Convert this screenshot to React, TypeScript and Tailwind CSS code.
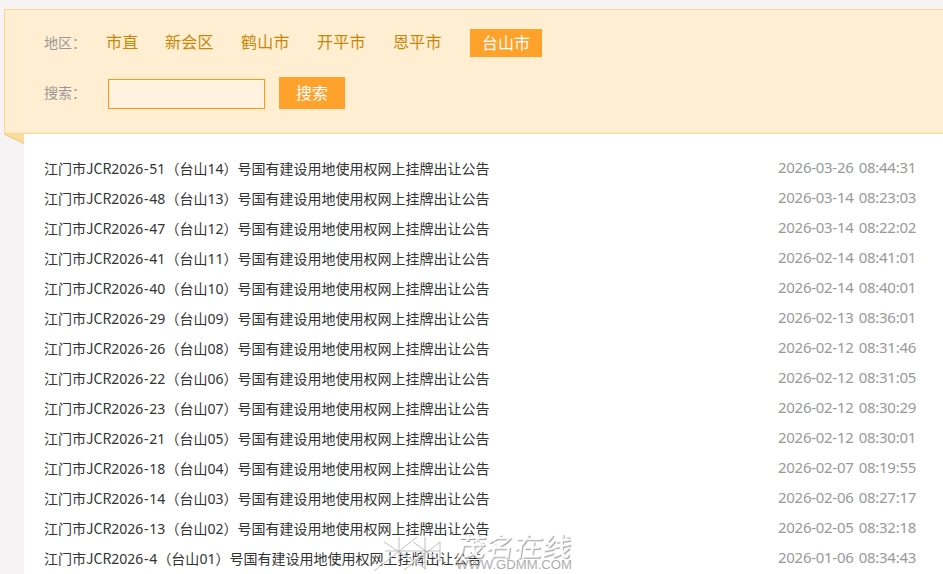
const REGIONS = [
  { name: "市直", width: "w-[59px]" },
  { name: "新会区", width: "w-[76px]" },
  { name: "鹤山市", width: "w-[76px]" },
  { name: "开平市", width: "w-[76px]" },
  { name: "恩平市", width: "w-[77px]" },
];

const NOTICES = [
  { no: "51", area: "14", time: "2026-03-26 08:44:31" },
  { no: "48", area: "13", time: "2026-03-14 08:23:03" },
  { no: "47", area: "12", time: "2026-03-14 08:22:02" },
  { no: "41", area: "11", time: "2026-02-14 08:41:01" },
  { no: "40", area: "10", time: "2026-02-14 08:40:01" },
  { no: "29", area: "09", time: "2026-02-13 08:36:01" },
  { no: "26", area: "08", time: "2026-02-12 08:31:46" },
  { no: "22", area: "06", time: "2026-02-12 08:31:05" },
  { no: "23", area: "07", time: "2026-02-12 08:30:29" },
  { no: "21", area: "05", time: "2026-02-12 08:30:01" },
  { no: "18", area: "04", time: "2026-02-07 08:19:55" },
  { no: "14", area: "03", time: "2026-02-06 08:27:17" },
  { no: "13", area: "02", time: "2026-02-05 08:32:18" },
  { no: "4", area: "01", time: "2026-01-06 08:34:43" },
];

const LOGO = "M3 42 L46 8 M13 13 L55 40 M28 8 V34 M33 41 L69 13 M42 13 L69 32 M54 8 V40 M14 22 H69 M69 13 V32";

function Watermark() {
  return (
    <svg
      className="pointer-events-none absolute left-[370px] top-[528px]"
      width="210"
      height="46"
      viewBox="0 0 210 46"
      fill="none"
    >
      {/* 浮雕线条: 白底 + 灰影 */}
      <path d={LOGO} stroke="#fff" strokeOpacity="0.75" strokeWidth="1.8" />
      <path d={LOGO} stroke="#a8a8a8" strokeOpacity="0.8" strokeWidth="0.9" transform="translate(1 1)" />
      <text
        x="86"
        y="28"
        fontSize="25"
        fontWeight="500"
        fill="#fff"
        textLength="114"
        lengthAdjust="spacingAndGlyphs"
        transform="translate(4 0) skewX(-8)"
        className="font-['Noto_Sans_CJK_SC',sans-serif] drop-shadow-[1px_1px_0.4px_#999]"
      >
        茂名在线
      </text>
      <text
        x="86"
        y="40.5"
        fontSize="12.5"
        fill="#adadad"
        textLength="116"
        lengthAdjust="spacingAndGlyphs"
        className="font-['Liberation_Sans',sans-serif]"
      >
        WWW.GDMM.COM
      </text>
    </svg>
  );
}

export default function App() {
  return (
    <div className="relative h-[574px] w-[943px] overflow-hidden bg-[#f7f2f3] pl-1 pt-[9px] font-['Noto_Sans','Noto_Sans_CJK_SC',sans-serif]">
      {/* 筛选 */}
      <section className="h-[125px] border-y border-l border-[#ffd78b] bg-[#ffeed2] pl-[39px] pt-[19px]">
        <div className="flex h-7 items-center whitespace-nowrap">
          <span className="w-[62px] text-sm text-[#999]">地区：</span>
          {REGIONS.map((r) => (
            <a key={r.name} className={`${r.width} pb-0.5 text-base leading-6 tracking-[0.3px] text-[#c98708]`}>
              {r.name}
            </a>
          ))}
          <a className="flex h-7 w-[72px] items-center justify-center bg-[#ffa22b] text-base text-white">台山市</a>
        </div>
        <div className="mt-5 flex h-8 items-center whitespace-nowrap">
          <span className="w-[64px] text-sm text-[#999]">搜索：</span>
          <input className="mt-0.5 h-[30px] w-[157px] border border-[#ff9812] bg-[#fff2df] outline-none" />
          <button className="ml-3.5 h-8 w-[66px] bg-[#ffa22b] text-base text-white">搜索</button>
        </div>
      </section>

      <div className="flex">
        {/* 折角 */}
        <svg width="20" height="10" viewBox="0 0 20 10">
          <path d="M0 0 H20 V9.5 Z" fill="#fbdc9f" />
          <path d="M0 0 L20 9.5" stroke="#f5c56c" />
        </svg>
        <ul className="h-[440px] flex-1 bg-white pl-5 pr-[27px] pt-5">
          {NOTICES.map((n) => (
            <li key={n.no} className="flex h-[30px] items-center justify-between whitespace-nowrap">
              <a className="pb-0.5 text-sm text-[#333]">
                江门市<span className="font-['Noto_Sans_CJK_SC',sans-serif]">JCR</span>2026
                <span className="inline-block w-1.5 text-center">-</span>
                {n.no}（台山{n.area}）号国有建设用地使用权网上挂牌出让公告
              </a>
              <time className="w-[138px] pb-1 text-[15px] leading-6 tracking-[-0.28px] text-[#999] [word-spacing:1.6px]">
                {n.time}
              </time>
            </li>
          ))}
        </ul>
      </div>

      <Watermark />
    </div>
  );
}
